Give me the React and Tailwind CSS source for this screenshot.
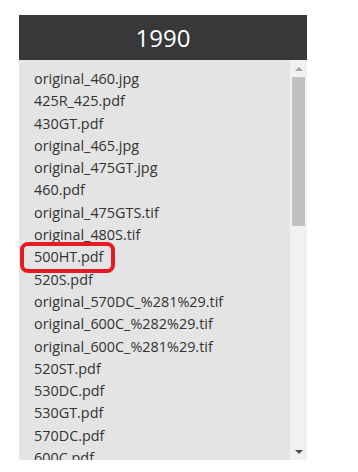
const files = [
  'original_460.jpg',
  '425R_425.pdf',
  '430GT.pdf',
  'original_465.jpg',
  'original_475GT.jpg',
  '460.pdf',
  'original_475GTS.tif',
  'original_480S.tif',
  '500HT.pdf',
  '520S.pdf',
  'original_570DC_%281%29.tif',
  'original_600C_%282%29.tif',
  'original_600C_%281%29.tif',
  '520ST.pdf',
  '530DC.pdf',
  '530GT.pdf',
  '570DC.pdf',
  '600C.pdf',
];

export default function App() {
  return (
    <div className="w-[358px] h-[472px] bg-white pt-[15px] pl-[19px] font-['Open_Sans',sans-serif]">
      <div className="w-[288px] flex flex-col">
        <div className="h-[45px] bg-[#38383a] flex items-center justify-center text-white text-[24px]">
          1990
        </div>
        <div className="h-[400px] flex overflow-hidden">
          {/* file list */}
          <div className="relative flex-1 bg-[#e4e4e4] pt-[8px] pl-[15px] overflow-hidden">
            {files.map((f) => (
              <div key={f} className="relative text-[14.4px] leading-[22.3px] text-[#333] whitespace-nowrap">
                {f}
                {f === '500HT.pdf' && (
                  <div className="absolute left-[-14px] top-[-4px] w-[95px] h-[31px] border-[4px] border-[#e51a24] rounded-[8px]" />
                )}
              </div>
            ))}
          </div>
          {/* scrollbar */}
          <div className="w-[17px] bg-[#f1f1f1] flex flex-col items-center">
            <div className="h-[17px] flex items-center justify-center">
              <div className="w-0 h-0 border-l-[4px] border-r-[4px] border-b-[4px] border-l-transparent border-r-transparent border-b-[#a3a3a3]" />
            </div>
            <div className="w-[13px] h-[149px] bg-[#c1c1c1]" />
            <div className="flex-1" />
            <div className="h-[17px] flex items-center justify-center">
              <div className="w-0 h-0 border-l-[4px] border-r-[4px] border-t-[4px] border-l-transparent border-r-transparent border-t-[#505050]" />
            </div>
          </div>
        </div>
      </div>
    </div>
  );
}
